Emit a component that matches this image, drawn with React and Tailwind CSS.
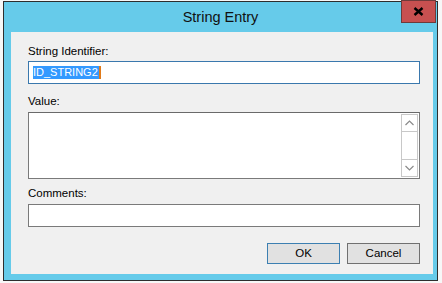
import React from "react";

function ScrollArrow({ up }) {
  return (
    <div className="h-[16px] flex items-center justify-center">
      <svg width="9" height="6" viewBox="0 0 9 6">
        <path
          d={up ? "M0.5 5 L4.5 1 L8.5 5" : "M0.5 1 L4.5 5 L8.5 1"}
          fill="none"
          stroke="#8a8a8a"
          strokeWidth="1.2"
        />
      </svg>
    </div>
  );
}

export default function App() {
  return (
    <div
      className="w-[442px] h-[283px] overflow-hidden bg-[#f7f7f7] pl-[3px] pt-[1px]"
      style={{ fontFamily: '"Liberation Sans", Arial, sans-serif' }}
    >
      <div className="w-[435px] h-[280px] border border-[#2e2e2e] bg-[#66cbea] flex flex-col relative">
        {/* title bar */}
        <div className="h-[30px] flex items-center justify-center">
          <span className="text-[14.5px] text-[#111] pt-[1px]">String Entry</span>
        </div>
        <button className="absolute top-[-2px] right-[1px] w-[35px] h-[23px] bg-[#c75050] border border-[#6e3a3a] flex items-center justify-center">
          <svg width="11" height="9" viewBox="0 0 11 9">
            <path d="M1.5 1 L9.5 8 M9.5 1 L1.5 8" stroke="#000" strokeWidth="2.4" />
          </svg>
        </button>

        {/* client area */}
        <div className="ml-[7px] mr-[4px] mb-[6px] flex-1 bg-[#f0f0f0] flex flex-col pl-[17px] pr-[13px] pt-[12px] text-[11.5px] text-black">
          <label className="leading-[15px]">String Identifier:</label>
          <div className="mt-[2px] h-[23px] border border-[#3a78ad] bg-white flex items-center pl-[4px]">
            <span className="relative bg-[#3399ff] text-white text-[11px] leading-[13px] h-[13px] pr-[1px]">
              ID_STRING2
              <span className="absolute right-[-2px] top-0 w-[2px] h-[13px] bg-[#e07a1a]" />
            </span>
          </div>

          <label className="mt-[10px] leading-[15px]">Value:</label>
          <div className="mt-[3px] h-[67px] border border-[#7a7a7a] border-t-[#6a6a6a] bg-white flex justify-end p-[1px]">
            <div className="w-[17px] border border-[#c8c8c8] flex flex-col justify-between">
              <div className="border-b border-[#c8c8c8]">
                <ScrollArrow up />
              </div>
              <div className="border-t border-[#c8c8c8]">
                <ScrollArrow />
              </div>
            </div>
          </div>

          <label className="mt-[7px] leading-[15px]">Comments:</label>
          <div className="mt-[3px] h-[23px] border border-[#7a7a7a] bg-white" />

          <div className="mt-[16px] flex justify-end gap-[7px]">
            <button className="w-[73px] h-[21px] border border-[#3c7fb1] bg-[#e1e1e1] text-[11.5px] leading-none">
              OK
            </button>
            <button className="w-[73px] h-[21px] border border-[#707070] bg-[#e1e1e1] text-[11.5px] leading-none">
              Cancel
            </button>
          </div>
        </div>
      </div>
    </div>
  );
}
